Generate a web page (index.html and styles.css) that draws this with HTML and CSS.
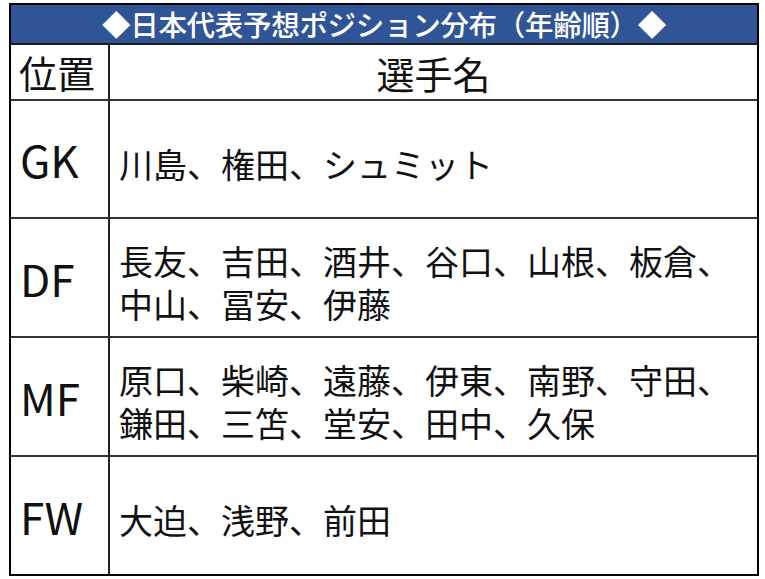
FILE: index.html
```html
<!DOCTYPE html>
<html lang="ja">
<head>
<meta charset="utf-8">
<link rel="stylesheet" href="styles.css">
</head>
<body>
<div class="sheet">
  <div class="title">◆日本代表予想ポジション分布（年齢順）◆</div>
  <div class="grid">
    <div class="pos head">位置</div>
    <div class="names head">選手名</div>
    <div class="pos">GK</div>
    <div class="names"><div class="line">川島、権田、シュミット</div></div>
    <div class="pos">DF</div>
    <div class="names"><div class="line">長友、吉田、酒井、谷口、山根、板倉、</div><div class="line">中山、冨安、伊藤</div></div>
    <div class="pos">MF</div>
    <div class="names"><div class="line">原口、柴崎、遠藤、伊東、南野、守田、</div><div class="line">鎌田、三笘、堂安、田中、久保</div></div>
    <div class="pos last">FW</div>
    <div class="names last"><div class="line">大迫、浅野、前田</div></div>
  </div>
</div>
</body>
</html>
```
FILE: styles.css
```css
html, body {
  margin: 0;
  padding: 0;
  background: #ffffff;
}
body {
  font-family: "Noto Sans CJK JP", "Noto Sans", sans-serif;
  color: #111;
}
.sheet {
  margin: 3px 0 0 9px;
  width: 750px;
  border: 2px solid #000;
  box-sizing: border-box;
}
.title {
  height: 38px;
  background: #2f5597;
  color: #fff;
  font-size: 28.5px;
  font-weight: 500;
  line-height: 38px;
  text-align: center;
  letter-spacing: -0.3px;
  border-bottom: 2px solid #1a1a1a;
}
.grid {
  display: grid;
  grid-template-columns: 99px 1fr;
  grid-template-rows: 56px 118px 119px 119px 117px;
}
.pos, .names {
  display: flex;
  align-items: center;
  border-bottom: 2px solid #333;
}
.pos {
  border-right: 2px solid #222;
  padding-left: 9px;
  font-size: 44px;
  line-height: 1;
}
.names {
  flex-direction: column;
  justify-content: center;
  align-items: flex-start;
  padding-left: 9px;
  font-size: 34px;
  padding-top: 8px;
  box-sizing: border-box;
}
.line {
  height: 43px;
  line-height: 43px;
  overflow: visible;
}
.head {
  font-size: 38px;
  padding-top: 0;
}
.names.head {
  align-items: center;
  padding-left: 0;
}
.pos.head {
  padding-left: 8px;
}
.last {
  border-bottom: none;
}
```
